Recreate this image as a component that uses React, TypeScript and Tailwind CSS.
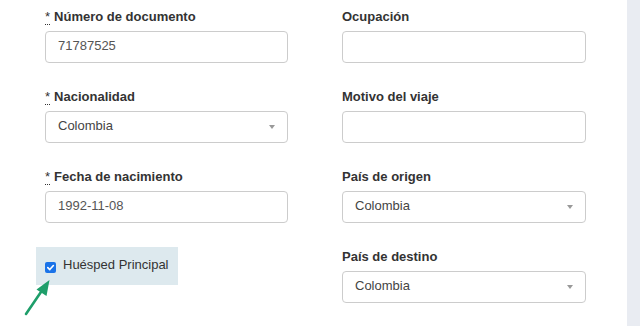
import React from "react";

const font = { fontFamily: '"Liberation Sans", Arial, sans-serif' };

function Label({ text, req }: { text: string; req?: boolean }) {
  return (
    <div className="text-[13px] leading-[20px] font-bold text-[#333] mb-[4px] whitespace-nowrap">
      {req && (
        <abbr className="font-normal mr-[4px] border-b border-dotted border-[#333]" title="required" style={{ textDecoration: "none" }}>
          *
        </abbr>
      )}
      {text}
    </div>
  );
}

function Input({ value }: { value?: string }) {
  return (
    <div className="h-[32px] border border-[#ccc] rounded-[4px] bg-white px-[12px] flex items-center text-[13px] text-[#555]">
      <span className="-mt-[2px]">{value}</span>
    </div>
  );
}

function Select({ value }: { value: string }) {
  return (
    <div className="h-[32px] border border-[#ccc] rounded-[4px] bg-white pl-[12px] pr-[12px] flex items-center justify-between text-[13px] text-[#444]">
      <span className="-mt-[2px]">{value}</span>
      <span className="w-0 h-0 border-t-[4px] border-t-[#999] border-x-[3px] border-x-transparent" />
    </div>
  );
}

function Field({ label, req, children }: { label: string; req?: boolean; children: React.ReactNode }) {
  return (
    <div className="h-[80px]">
      <Label text={label} req={req} />
      {children}
    </div>
  );
}

export default function App() {
  return (
    <div className="w-[640px] h-[326px] flex bg-white overflow-hidden relative" style={font}>
      <div className="flex-1 pl-[45px] pt-[7px]">
        <div className="grid grid-cols-[243px_244px] gap-x-[54px]">
          <div>
            <Field label="Número de documento" req>
              <Input value="71787525" />
            </Field>
            <Field label="Nacionalidad" req>
              <Select value="Colombia" />
            </Field>
            <Field label="Fecha de nacimiento" req>
              <Input value="1992-11-08" />
            </Field>
            <div className="ml-[-9px] w-[142px] h-[38px] bg-[#dde9ee] flex items-start pl-[9px] pt-[8px]">
              <span className="mt-[7px] w-[11px] h-[11px] rounded-[2px] bg-[#1a73e8] flex items-center justify-center shrink-0">
                <svg width="9" height="9" viewBox="0 0 10 10">
                  <path d="M2 5.2 L4.2 7.3 L8.2 2.8" fill="none" stroke="white" strokeWidth="1.8" strokeLinecap="round" strokeLinejoin="round" />
                </svg>
              </span>
              <span className="ml-[7px] text-[13px] leading-[20px] text-[#333]">Huésped Principal</span>
            </div>
          </div>
          <div>
            <Field label="Ocupación">
              <Input />
            </Field>
            <Field label="Motivo del viaje">
              <Input />
            </Field>
            <Field label="País de origen">
              <Select value="Colombia" />
            </Field>
            <Field label="País de destino">
              <Select value="Colombia" />
            </Field>
          </div>
        </div>
      </div>
      <div className="w-[13px] bg-[#e9ecf2]" />
      <svg className="absolute left-0 top-0 pointer-events-none" width="80" height="326" viewBox="0 0 80 326">
        <line x1="26" y1="314" x2="43" y2="289" stroke="#1e9e6a" strokeWidth="2.6" strokeLinecap="round" />
        <polygon points="49.5,280 36.5,289.5 46.5,296" fill="#1e9e6a" />
      </svg>
    </div>
  );
}
